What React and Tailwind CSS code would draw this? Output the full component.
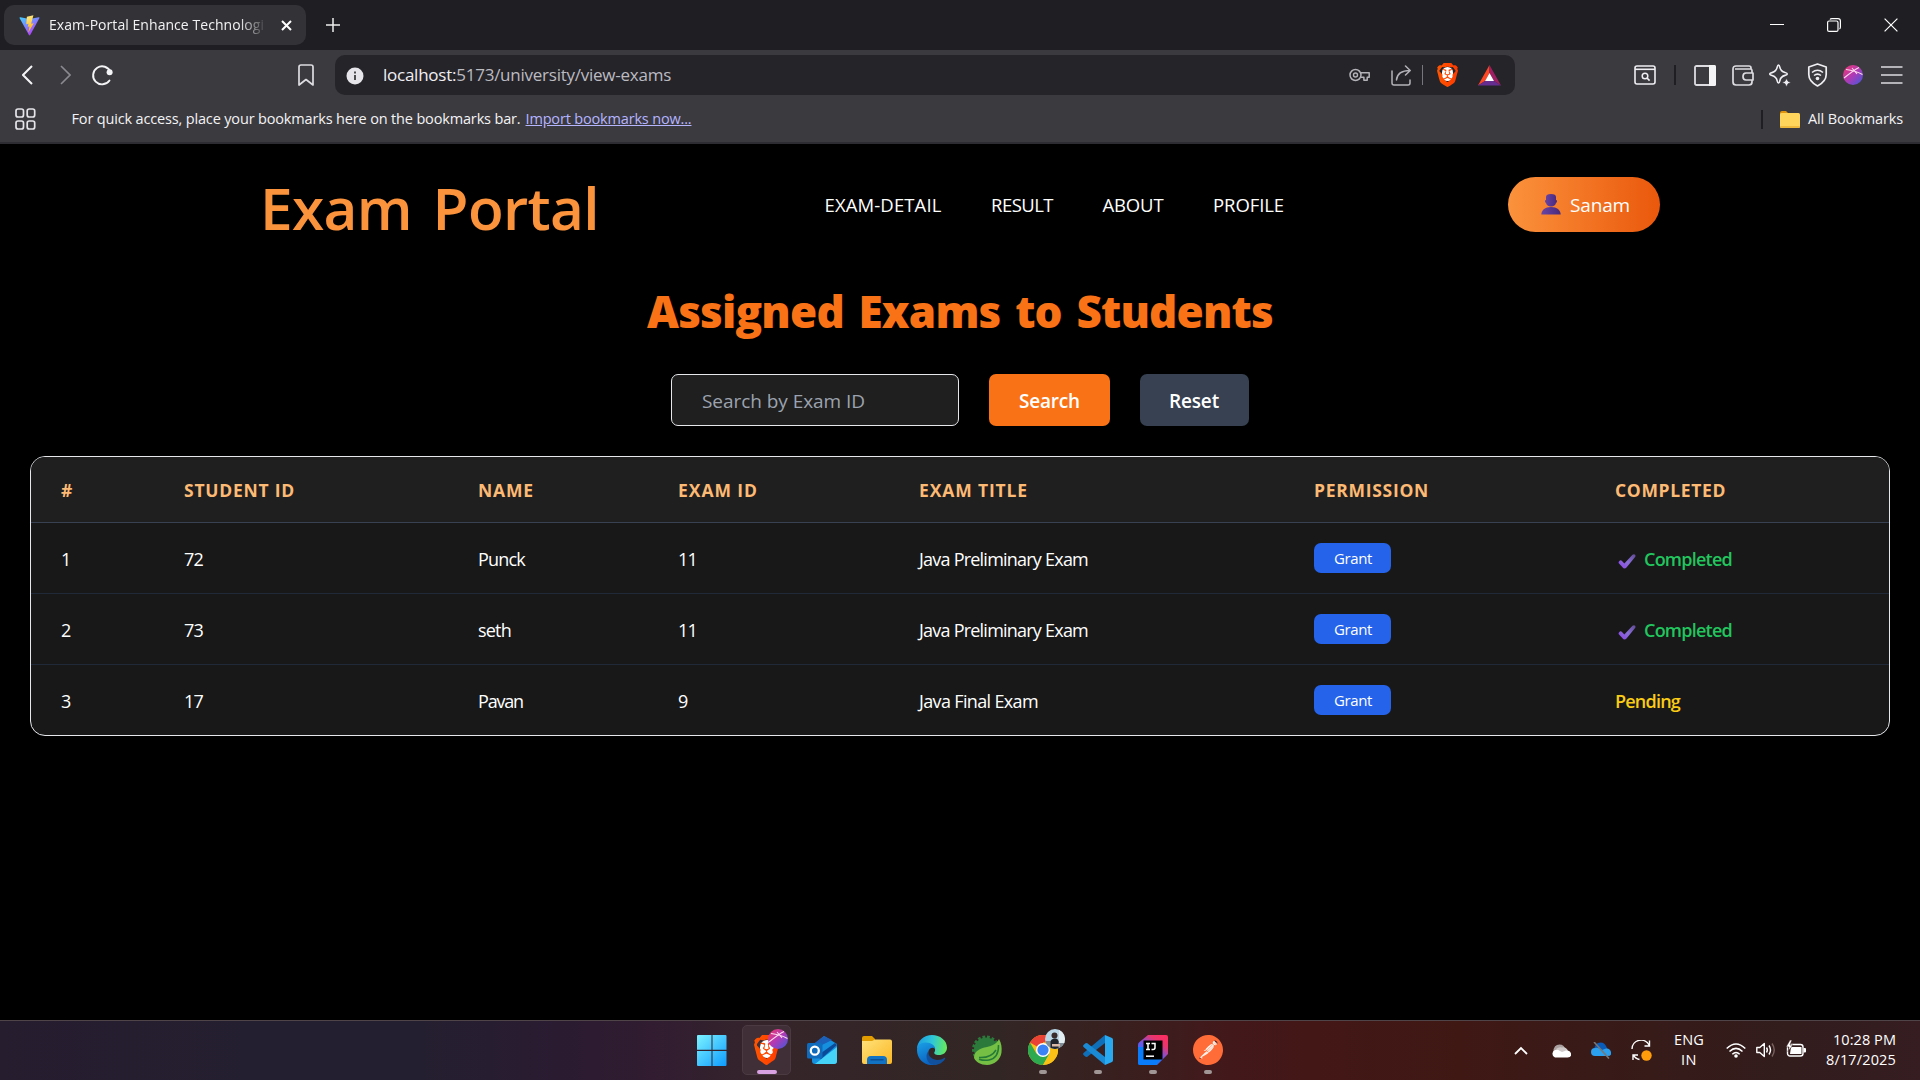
import React, { useLayoutEffect, useRef } from "react";
import { SiBrave, SiPostman } from "react-icons/si";

/* One-line label whose tracking is set so that it fills a given width. */
function Fit({ w, className = "", children }) {
  const ref = useRef(null);
  useLayoutEffect(() => {
    const el = ref.current;
    el.style.letterSpacing = "0px";
    const range = document.createRange();
    range.selectNodeContents(el);
    const natural = range.getBoundingClientRect().width;
    el.style.letterSpacing = (w - natural) / el.textContent.length + "px";
  }, [w]);
  return (
    <span ref={ref} className={"inline-block shrink-0 whitespace-nowrap " + className} style={{ width: w }}>
      {children}
    </span>
  );
}

function Svg({ w = 20, h = w, vb, className = "", children }) {
  return (
    <svg width={w} height={h} viewBox={vb || `0 0 ${w} ${h}`} fill="none" className={"shrink-0 " + className}>
      {children}
    </svg>
  );
}

function BraveLogo({ w, h, id }) {
  return (
    <span className="relative block shrink-0" style={{ width: w, height: h }}>
      <span className="absolute left-[22%] top-[18%] block h-[58%] w-[56%] rounded-full bg-white" />
      <svg width={w} height={h} viewBox="1.75 0 20.5 24" preserveAspectRatio="none" className="absolute left-0 top-0">
        <defs>
          <linearGradient id={id} x1="0" x2="1">
            <stop stopColor="#ff5500" />
            <stop offset="1" stopColor="#ff3a00" />
          </linearGradient>
        </defs>
        <SiBrave size={24} style={{ fill: `url(#${id})` }} />
      </svg>
    </span>
  );
}

function ProfileBall({ size, id }) {
  return (
    <Svg w={size} vb="0 0 20 20">
      <defs>
        <linearGradient id={id} x1="0" y1="0" x2="1" y2="1">
          <stop stopColor="#f0386b" />
          <stop offset=".5" stopColor="#b03ab5" />
          <stop offset="1" stopColor="#3b5be0" />
        </linearGradient>
      </defs>
      <circle cx="10" cy="10" r="10" fill={`url(#${id})`} />
      <path d="M1 13C6 9 11 5 16 2.500M3 4.500c5 .5 11 2 16.500 5M9 3l5 6" stroke="#ffd9ee" strokeWidth="1.100" />
    </Svg>
  );
}

function TabStrip() {
  return (
    <div className="flex h-[50px] items-center bg-[#1f1e23] pl-1 text-[#f2f2f4]">
      <div className="flex h-10 w-[302px] items-center rounded-[10px] bg-[#333337] pl-[15px]">
        <Svg w={21} vb="0 0 32 32">
          <defs>
            <linearGradient id="viteA" x1="0" y1="0" x2=".7" y2="1">
              <stop stopColor="#41d1ff" />
              <stop offset="1" stopColor="#bd34fe" />
            </linearGradient>
            <linearGradient id="viteB" x1=".4" y1="0" x2=".6" y2="1">
              <stop stopColor="#ffea83" />
              <stop offset="1" stopColor="#ffa800" />
            </linearGradient>
          </defs>
          <path d="M31 5 17 30.500q-.9 1.400-1.800 0L1 5q-.6-1.600 1-1.400l14 2.500 14-2.500q1.600-.2 1 1.400Z" fill="url(#viteA)" />
          <path d="m22 .5-10 2-1 11.500 3.500-.5-1.200 4.500 2.700-.5L14 27l8.500-14.500-4 .8Z" fill="url(#viteB)" />
        </Svg>
        <div className="ml-[9px] w-[218px] overflow-hidden text-[14px] leading-5 [mask-image:linear-gradient(to_right,black_190px,transparent_218px)]">
          <Fit w={215}>Exam-Portal Enhance Technologi</Fit>
        </div>
        <Svg w={11} className="ml-[14px]">
          <path d="m1 1 9 9m0-9-9 9" stroke="#fff" strokeWidth="2" />
        </Svg>
      </div>
      <Svg w={14} className="ml-5">
        <path d="M7 0v14M0 7h14" stroke="#eee" strokeWidth="1.500" />
      </Svg>
      <div className="ml-auto mr-[22px] flex items-center gap-[43px]">
        <Svg w={14}>
          <path d="M0 6.500h14" stroke="#fff" strokeWidth="1" />
        </Svg>
        <Svg w={14}>
          <rect x=".6" y="3" width="10.400" height="10.400" rx="1.500" stroke="#fff" strokeWidth="1.200" />
          <path d="M3 1.500Q3.500.6 5 .6h6q2.400 0 2.400 2.400v6q0 1.500-.9 2" stroke="#fff" strokeWidth="1.200" />
        </Svg>
        <Svg w={14}>
          <path d="m.6.6 12.800 12.800m0-12.800L.6 13.400" stroke="#fff" strokeWidth="1.200" />
        </Svg>
      </div>
    </div>
  );
}

function AddressRow() {
  return (
    <div className="flex h-[50px] items-center">
      <Svg w={11} h={20} className="ml-[22px]">
        <path d="m10 1-9 9 9 9" stroke="#f4f4f6" strokeWidth="2" />
      </Svg>
      <Svg w={11} h={20} className="ml-[27px]">
        <path d="m1 1 9 9-9 9" stroke="#8b8a90" strokeWidth="1.600" />
      </Svg>
      <Svg w={22} className="ml-5">
        <path d="M18.500 16.500A9 9 0 1 1 19.500 8" stroke="#f4f4f6" strokeWidth="1.900" strokeLinecap="round" />
        <circle cx="18.600" cy="8.200" r="3" fill="#f4f4f6" />
      </Svg>
      <Svg w={16} h={22} className="ml-[185px]">
        <path d="M1 3q0-2 2-2h10q2 0 2 2v18l-7-5.500L1 21Z" stroke="#dddce1" strokeWidth="1.700" strokeLinejoin="round" />
      </Svg>
      <div className="ml-[21px] flex h-10 w-[1180px] items-center rounded-[10px] bg-[#252429]">
        <Svg w={18} className="ml-[11px] mt-0.5">
          <circle cx="9" cy="9" r="8.500" fill="#e6e5ea" />
          <path d="M9 8v5M9 4.600v1.800" stroke="#333" strokeWidth="1.700" />
        </Svg>
        <Fit w={288} className="ml-[19px] text-[17px] leading-6 text-[#bcbbc1]">
          <span className="text-[#f0eff3]">localhost:</span>5173/university/view-exams
        </Fit>
        <Svg w={21} h={16} className="ml-auto">
          <circle cx="6.500" cy="8" r="5.500" stroke="#b3b2b8" strokeWidth="1.500" />
          <circle cx="6.500" cy="8" r="2" stroke="#b3b2b8" strokeWidth="1.400" />
          <path d="M11.500 5.700h8.700v4.500h-2v3h-3.300v-3h-3.200" stroke="#b3b2b8" strokeWidth="1.500" strokeLinejoin="round" />
        </Svg>
        <Svg w={21} className="ml-[21px]">
          <path d="M1 6v12q0 2 2 2h14q2 0 2-2v-3M5.500 15C6 9 10 5.500 19 5.500M14.500 1l4.700 4.500-4.700 4.500" stroke="#b3b2b8" strokeWidth="1.500" strokeLinecap="round" strokeLinejoin="round" />
        </Svg>
        <div className="ml-[10px] h-5 w-px bg-[#77767c]" />
        <div className="ml-[14px]">
          <BraveLogo w={21} h={24} id="braveSmall" />
        </div>
        <Svg w={23} h={21} className="ml-5 mr-[14px]">
          <path d="M11.500 0 0 20.500 7 16l4.500-8Z" fill="#ff4724" />
          <path d="M11.500 0 23 20.500 16 16l-4.500-8Z" fill="#9e1f63" />
          <path d="M0 20.500h23L16 16H7Z" fill="#662d91" />
          <path d="M11.500 8 7 16h9Z" fill="#fff" />
        </Svg>
      </div>
      <Svg w={22} h={20} className="ml-[119px]">
        <rect x="1" y="1" width="20" height="18" rx="2" stroke="#efeef2" strokeWidth="1.600" />
        <path d="M1 4.300h20" stroke="#efeef2" strokeWidth="1.600" />
        <circle cx="11" cy="11" r="2.800" stroke="#efeef2" strokeWidth="1.500" />
        <path d="m13 13 2.600 2.600" stroke="#efeef2" strokeWidth="1.700" />
      </Svg>
      <div className="ml-[18px] h-5 w-0.5 bg-[#1f1e23]" />
      <div className="ml-[18px] flex items-center gap-[15.600px]">
        <Svg w={22} h={21}>
          <rect x="1" y="1" width="20" height="19" rx="1.500" stroke="#dddce1" strokeWidth="1.800" />
          <path d="M15 0h5.500Q22 0 22 1.500v18q0 1.500-1.500 1.500H15Z" fill="#f4f4f6" />
        </Svg>
        <Svg w={22} h={21}>
          <path d="M20 8V5.500Q20 4 18.500 4H3M19 4V3q0-2-2-2H4Q1 1 1 4v13q0 3 3 3h13q3 0 3-3v-2" stroke="#dddce1" strokeWidth="1.700" />
          <path d="M21 8h-7q-3 0-3 3.500t3 3.500h7Z" stroke="#dddce1" strokeWidth="1.700" strokeLinejoin="round" />
        </Svg>
        <Svg w={22} h={24}>
          <path d="M9.500 2c.8 0 1 .6 1.300 2.200.7 3.400 1.800 4.500 5.200 5.400 1.600.4 2.300.6 2.300 1.400s-.7 1-2.300 1.400c-3.400.9-4.500 2-5.200 5.400C10.500 19.400 10.300 20 9.500 20s-1-.6-1.300-2.200C7.500 14.400 6.400 13.300 3 12.400 1.400 12 .7 11.800.7 11S1.400 10 3 9.600c3.400-.9 4.500-2 5.200-5.400C8.500 2.600 8.700 2 9.500 2Z" stroke="#efeef2" strokeWidth="1.600" />
          <path d="M17.500 15.500 19 18.300l3 1.200-3 1.200-1.500 3-1.500-3-3-1.200 3-1.200Z" fill="#efeef2" stroke="#3b3a3f" strokeWidth=".6" />
        </Svg>
        <Svg w={21} h={26}>
          <path d="m10.500 2 8.700 3v7.500c0 5.500-4 9-8.700 11.500-4.700-2.500-8.700-6-8.700-11.500V5Z" stroke="#efeef2" strokeWidth="1.700" strokeLinejoin="round" />
          <path d="M5 10.500q5.500-4.500 11 0M7 13.500q3.500-2.800 7 0" stroke="#efeef2" strokeWidth="1.600" />
          <circle cx="10.500" cy="16.500" r="1.800" fill="#efeef2" />
        </Svg>
        <ProfileBall size={20} id="ballSmall" />
        <Svg w={22} h={20} className="ml-0.5">
          <path d="M0 2h21.500M0 10h21.500M0 18h21.500" stroke="#dddce1" strokeWidth="1.700" />
        </Svg>
      </div>
    </div>
  );
}

function BookmarksRow() {
  return (
    <div className="flex h-[42px] items-center pb-[4px] text-[14.500px] text-[#f3f3f5]">
      <Svg w={21} h={22} className="ml-[14.500px]">
        <g stroke="#e6e5ea" strokeWidth="1.700">
          <rect x="1" y="1" width="7.500" height="8" rx="2" />
          <rect x="12.200" y="1" width="7.500" height="8" rx="2" />
          <rect x="1" y="13" width="7.500" height="8" rx="2" />
          <rect x="12.200" y="13" width="7.500" height="8" rx="2" />
        </g>
      </Svg>
      <Fit w={449} className="ml-9 text-[14.500px] leading-5">
        For quick access, place your bookmarks here on the bookmarks bar.
      </Fit>
      <Fit w={166} className="ml-[5px] text-[14.500px] leading-5 text-[#b5b4ff] underline">
        Import bookmarks now...
      </Fit>
      <div className="ml-auto h-[19px] w-0.5 bg-[#1f1e23]" />
      <Svg w={20} h={17} className="ml-[17px] mr-[8px]">
        <path d="M0 2q0-2 2-2h4l2 2v4H0Z" fill="#e0930c" />
        <rect y="2" width="20" height="15" rx="1.500" fill="#ffd45c" />
        <path d="M0 15h20q0 2-1.500 2h-17Q0 17 0 15Z" fill="#eeb93c" />
      </Svg>
      <Fit w={95} className="mr-[17px] text-[14.500px] leading-5">All Bookmarks</Fit>
    </div>
  );
}

const NAV = [
  ["EXAM-DETAIL", 117],
  ["RESULT", 62],
  ["ABOUT", 61],
  ["PROFILE", 71],
];

function SiteHeader() {
  return (
    <header className="flex h-[122px] items-center">
      <Fit w={339} className="ml-[260px] pt-[3px] text-[58.500px] font-semibold leading-[72px] text-[#fb923c] [word-spacing:6px]">Exam Portal</Fit>
      <nav className="ml-[225.500px] flex gap-[49.500px] text-[18.500px] leading-7 text-white">
        {NAV.map(([label, w]) => (
          <Fit key={label} w={w}>{label}</Fit>
        ))}
      </nav>
      <button className="mb-0.5 ml-auto mr-[260px] flex h-[55px] w-[152px] items-center rounded-full bg-linear-to-r/srgb from-[#fb923c] to-[#ea580c] pl-[33px] text-white">
        <Svg w={20} h={21}>
          <defs>
            <linearGradient id="bust" x1="0" x2="1">
              <stop stopColor="#6a45a5" />
              <stop offset="1" stopColor="#48297c" />
            </linearGradient>
          </defs>
          <path d="M5 3q0-3 5-3t5 3v3q1 0 1 1.200T15 9c-.6 2.200-2 3.500-5 3.500S5.600 11.200 5 9Q4 8.500 4 7.200T5 6Z" fill="url(#bust)" />
          <path d="M.3 20.500C.5 16 4 13 10 13s9.500 3 9.700 7.500Z" fill="url(#bust)" />
        </Svg>
        <Fit w={60} className="ml-[9px] pt-px text-[19px] font-medium leading-7">Sanam</Fit>
      </button>
    </header>
  );
}

function SearchForm() {
  return (
    <div className="mt-[33px] flex h-[52px] justify-center gap-[30px]">
      <div className="flex w-72 items-center rounded-[7px] border border-[#e5e7eb] bg-[#1f1f1f] pl-[30px] pt-0.5">
        <Fit w={163} className="text-[19px] leading-7 text-[#9ca3af]">Search by Exam ID</Fit>
      </div>
      <button className="flex w-[121px] items-center rounded-[7px] bg-[#f97316] pl-[30px] pt-0.5 text-white">
        <Fit w={61} className="text-[19px] font-semibold leading-7">Search</Fit>
      </button>
      <button className="flex w-[109px] items-center rounded-[7px] bg-[#374151] pl-[29px] pt-0.5 text-white">
        <Fit w={50} className="text-[19px] font-semibold leading-7">Reset</Fit>
      </button>
    </div>
  );
}

const COLUMNS = [
  ["#", 12],
  ["STUDENT ID", 111],
  ["NAME", 56],
  ["EXAM ID", 80],
  ["EXAM TITLE", 109],
  ["PERMISSION", 115],
  ["COMPLETED", 111],
];

const ROWS = [
  { n: "1", id: "72", name: ["Punck", 47], exam: ["11", 19], title: ["Java Preliminary Exam", 169], done: true },
  { n: "2", id: "73", name: ["seth", 33], exam: ["11", 19], title: ["Java Preliminary Exam", 169], done: true },
  { n: "3", id: "17", name: ["Pavan", 45], exam: ["9", 10], title: ["Java Final Exam", 119], done: false },
];

function CheckMark() {
  return (
    <Svg w={18} h={15}>
      <defs>
        <linearGradient id="tick" x1="0" y1="1" x2="1" y2="0">
          <stop stopColor="#8b3fe8" />
          <stop offset=".5" stopColor="#8a6fd6" />
          <stop offset="1" stopColor="#5f4a94" />
        </linearGradient>
      </defs>
      <path d="M1 7.500Q2.500 5.500 4 7l2.300 2.500L14.500.8q1.200-.9 2.300-.2 1.200 1 .3 2.500L8.500 13.500Q6.300 15.800 4.300 13L.8 9.200Q.3 8.300 1 7.500Z" fill="url(#tick)" />
    </Svg>
  );
}

function ExamTable() {
  const grid = "grid grid-cols-[123px_294px_200px_241px_395px_301px_1fr] items-center [&>*]:justify-self-start [&>*]:ml-[30px]";
  return (
    <div className="mx-[30px] mt-[30px] overflow-hidden rounded-[15px] border border-[#e5e7eb] bg-[#181818]">
      <div className={grid + " h-[66px] border-b border-[#374151] bg-[#1f1f1f] text-[17.500px] font-bold leading-7 text-[#fdba74]"}>
        {COLUMNS.map(([label, w]) => (
          <Fit key={label} w={w}>{label}</Fit>
        ))}
      </div>
      {ROWS.map((r) => (
        <div
          key={r.n}
          className={grid + " h-[71px] border-b border-[#1f2937] text-[18px] leading-7 text-white last:h-[70px] last:border-b-0"}
        >
          <Fit w={10} className="pt-px">{r.n}</Fit>
          <Fit w={19} className="pt-px">{r.id}</Fit>
          <Fit w={r.name[1]} className="pt-px">{r.name[0]}</Fit>
          <Fit w={r.exam[1]} className="pt-px">{r.exam[0]}</Fit>
          <Fit w={r.title[1]} className="pt-px">{r.title[0]}</Fit>
          <button className="flex h-[30px] w-[77px] items-center rounded-[7px] bg-[#2563eb] pl-5 text-white">
            <Fit w={38} className="text-[15px] leading-5">Grant</Fit>
          </button>
          {r.done ? (
            <div className="flex items-center pl-[3px] pt-px">
              <div className="pt-1.5"><CheckMark /></div>
              <Fit w={88} className="ml-2 font-semibold text-[#22c55e]">Completed</Fit>
            </div>
          ) : (
            <Fit w={65} className="pt-px font-semibold text-[#facc15]">Pending</Fit>
          )}
        </div>
      ))}
    </div>
  );
}

function WindowsIcon() {
  return (
    <Svg w={30} h={31}>
      <defs>
        <linearGradient id="win" x1="0" y1="0" x2="30" y2="31" gradientUnits="userSpaceOnUse">
          <stop stopColor="#7cf3ff" />
          <stop offset="1" stopColor="#0d9aff" />
        </linearGradient>
      </defs>
      <path d="M1 0h13.500v14.800H0V1Q0 0 1 0ZM15.500 0H28.500q1 0 1 1v13.800h-14ZM0 16h14.500v15H1q-1 0-1-1ZM15.500 16h14v14q0 1-1 1h-13Z" fill="url(#win)" />
    </Svg>
  );
}

function OutlookIcon() {
  return (
    <Svg w={30} h={28}>
      <path d="M5 10 17 0l13 8v17q0 3-3 3H8q-3 0-3-3Z" fill="#1490df" />
      <path d="M17 0 5 9v5l20-10Z" fill="#1b5fb8" />
      <path d="M10 20 28 7l2 2-16 14Z" fill="#0b4a97" />
      <path d="M8 28 30 11v14q0 3-3 3Z" fill="#45d4f8" />
      <rect y="7" width="15.500" height="15.500" rx="1.500" fill="#0f6cbd" />
      <circle cx="7.800" cy="14.700" r="4" stroke="#fff" strokeWidth="2.300" />
    </Svg>
  );
}

function ExplorerIcon() {
  return (
    <Svg w={30} h={29}>
      <defs>
        <linearGradient id="fold" x1="0" y1="0" x2="1" y2="1">
          <stop stopColor="#ffe27a" />
          <stop offset="1" stopColor="#fbb724" />
        </linearGradient>
      </defs>
      <path d="M0 2q0-2 2-2h8l3 3v6H0Z" fill="#e09c00" />
      <path d="M0 5h10l3-1.500h15q2 0 2 2V26q0 2-2 2H2q-2 0-2-2Z" fill="url(#fold)" />
      <path d="M5 28v-4q0-4 4-4h12q4 0 4 4v4Z" fill="#1273c4" />
      <path d="M9 23.800h12" stroke="#0b4f94" strokeWidth="1.500" strokeLinecap="round" />
    </Svg>
  );
}

function EdgeIcon() {
  return (
    <Svg w={30} vb="0 0 30 30">
      <defs>
        <linearGradient id="edgeA" x1="0" y1=".4" x2="1" y2=".5">
          <stop stopColor="#1b9de2" />
          <stop offset=".5" stopColor="#2fc6d8" />
          <stop offset="1" stopColor="#66eb5a" />
        </linearGradient>
        <linearGradient id="edgeB" x1="0" y1="0" x2=".4" y2="1">
          <stop stopColor="#1aa0e6" />
          <stop offset="1" stopColor="#0b63c0" />
        </linearGradient>
      </defs>
      <path d="M0 14C0 6 7 0 15 0s15 5.500 15 12.500c0 5-4 7.500-8 7.500s-5.500-1.500-4.500-3c1.500-2 .5-6.500-4.500-7.500C7 8.500 1.500 11 0 14Z" fill="url(#edgeA)" />
      <path d="M0 15C0 10.500 3.500 7.500 8.500 7.500c6 0 9.500 3 9.800 6.500-2.300-2.300-6.300-1-7 3C10.500 22 14 27 20 28c-2 1.500-3.500 2-5.500 2C6 30 0 23 0 15Z" fill="url(#edgeB)" />
      <path d="M11.200 16.500C10.500 20.500 15 25 20.500 25c3 0 5-1 6.500-2 1-.5 1.500.2 1 1C25 29 19 31 14.500 29.500 9.500 27 8 20 11.200 16.500Z" fill="#10509c" />
    </Svg>
  );
}

function SpringIcon() {
  return (
    <Svg w={30} vb="0 0 30 30">
      <circle cx="14" cy="14.500" r="12" stroke="#2c7a3b" strokeWidth="4" strokeDasharray="2.600 1.800" />
      <circle cx="14" cy="14.500" r="12" fill="#2c7a3b" />
      <path d="M27 4c2.500 4 3 9 2.500 13.500C28.500 25 22 30 15 30 8.500 30 4 27 2 23c0-7 6-9.500 13-11 5-1 9.500-3 12-8Z" fill="#74bf44" />
      <path d="M26.500 10c.3 8-2.500 13.500-9.500 15-3 .6-7 .3-10-.8M7 22.500c8 .5 14-2.500 17-7.500" stroke="#257a38" strokeWidth="1.500" fill="none" />
    </Svg>
  );
}

function ChromeIcon() {
  return (
    <div className="relative h-[30px] w-[30px]">
      <Svg w={30} vb="0 0 30 30">
        <circle cx="15" cy="15" r="15" fill="#fbc016" />
        <path d="M15 15 2 7.500A15 15 0 0 1 28 7.500H15Z" fill="#ea4335" />
        <path d="M2 7.500A15 15 0 0 0 15 30l6.500-11.300L15 15 8.500 18.700Z" fill="#2da94f" />
        <path d="M28 7.500H15l6.500 11.300L15 30A15 15 0 0 0 28 7.500Z" fill="#fbc016" />
        <circle cx="15" cy="15" r="7" fill="#fff" />
        <circle cx="15" cy="15" r="5.600" fill="#3b82f6" />
      </Svg>
      <Svg w={20} className="absolute -top-1.5 left-[17px]">
        <clipPath id="photo"><circle cx="10" cy="10" r="10" /></clipPath>
        <g clipPath="url(#photo)">
          <rect width="20" height="20" fill="#b9d7e6" />
          <rect y="12" width="20" height="8" fill="#7e8d95" />
          <path d="M14 0h6v14h-6Z" fill="#e2edf2" />
          <path d="M5.500 20v-7q0-3 4-3.500t4 3.500v7Z" fill="#23252d" />
          <circle cx="9.500" cy="6.500" r="3" fill="#3a2c2c" />
          <path d="M7 15h8v2.500H7Z" fill="#d8b9a8" />
        </g>
      </Svg>
    </div>
  );
}

function VsCodeIcon() {
  return (
    <Svg w={30} vb="0 0 30 30">
      <path d="m22 0 7 3q1 .5 1 2v20q0 1.500-1 2l-7 3Z" fill="#29a9f0" />
      <path d="M22 0v8L4 22 2.500 21.800.5 20q-.8-1 0-2Z" fill="#0f6fb8" />
      <path d="M22 30v-8L4 8l-1.500.2L.5 10q-.8 1 0 2Z" fill="#1a8ad4" />
    </Svg>
  );
}

function IntelliJIcon() {
  return (
    <Svg w={30} vb="0 0 30 30">
      <defs>
        <linearGradient id="ij" x1=".9" y1="0" x2=".2" y2="1">
          <stop stopColor="#ff2d5f" />
          <stop offset=".25" stopColor="#e8356e" />
          <stop offset=".55" stopColor="#6b57e8" />
          <stop offset="1" stopColor="#087cfa" />
        </linearGradient>
      </defs>
      <path d="M10 0h18q2 0 2 2v17L19 30H2q-2 0-2-2V10Q0 8 1.500 7Z" fill="url(#ij)" />
      <path d="M0 12h8v12h16l-6 6H2q-2 0-2-2Z" fill="#087cfa" />
      <rect x="5.500" y="5.500" width="19" height="19" fill="#000" />
      <path d="M8 8.500h4M10 8.500v6M8 14.500h4M13.500 8.500h3.500v4q0 2-2 2h-1.500" stroke="#fff" strokeWidth="1.500" />
      <path d="M8 21.200h8" stroke="#fff" strokeWidth="1.500" />
    </Svg>
  );
}

function PostmanIcon() {
  return (
    <span className="relative block h-[30px] w-[30px]">
      <span className="absolute inset-1 rounded-full bg-[#fff1ea]" />
      <SiPostman className="absolute inset-0 text-[#ff6c37]" size={30} />
    </span>
  );
}

function BraveTaskIcon() {
  return (
    <span className="relative block">
      <BraveLogo w={25} h={30} id="braveBig" />
      <span className="absolute -top-1.5 left-3.5">
        <ProfileBall size={20} id="ballBig" />
      </span>
    </span>
  );
}

const APPS = [
  { id: "start", icon: <WindowsIcon /> },
  { id: "brave", icon: <BraveTaskIcon />, active: true },
  { id: "outlook", icon: <OutlookIcon /> },
  { id: "explorer", icon: <ExplorerIcon /> },
  { id: "edge", icon: <EdgeIcon /> },
  { id: "spring", icon: <SpringIcon /> },
  { id: "chrome", icon: <ChromeIcon />, open: true },
  { id: "vscode", icon: <VsCodeIcon />, open: true },
  { id: "intellij", icon: <IntelliJIcon />, open: true },
  { id: "postman", icon: <PostmanIcon />, open: true },
];

function Taskbar() {
  return (
    <footer className="flex h-[60px] items-center border-t border-[#4f4448] bg-[linear-gradient(90deg,#261d2f_0%,#241f30_13%,#241f30_22%,#2a1b31_29%,#311c31_34%,#35252a_40%,#322624_52%,#38201f_58%,#43181b_64%,#431716_68%,#3f1814_76%,#361b19_86%,#321c1c_93%,#351d21_100%)] text-white">
      <div className="-mt-px ml-[687px] flex gap-[6.200px]">
        {APPS.map((app) => (
          <div
            key={app.id}
            className={
              "flex h-[50px] w-[49px] flex-col items-center rounded-[5px] " +
              (app.active ? "border border-[#4b3a42] bg-[#402f36]" : "")
            }
          >
            <div className={"flex h-[43px] items-center justify-center " + (app.active ? "pb-0 pt-[5px]" : "pt-[7px]")}>{app.icon}</div>
            {app.active && <div className="mt-px h-1 w-5 shrink-0 rounded-full bg-[#d9a0e2]" />}
            {app.open && <div className="mt-0.5 h-1 w-2 shrink-0 rounded-full bg-[#a09695]" />}
          </div>
        ))}
      </div>
      <Svg w={14} h={9} className="ml-auto">
        <path d="m1 8 6-6 6 6" stroke="#fff" strokeWidth="1.800" />
      </Svg>
      <Svg w={20} h={14} className="ml-[23px]">
        <path d="M3 9a6 6 0 0 1 11-5l2 4Z" fill="#a9a09f" />
        <path d="M11 3.500a5 5 0 0 1 6 3.500L9 9 5 5q3-2.500 6-1.500Z" fill="#cfcac9" />
        <path d="M4 13.500a4 4 0 0 1 0-7.500q2.500-.8 5 1l2 1 4-1.500q4-.5 5 3t-3.500 4Z" fill="#fff" />
      </Svg>
      <Svg w={20} h={17} className="ml-5">
        <path d="M4 9a6 6 0 0 1 11-5l2 4Z" fill="#0a5cba" />
        <path d="M4 14a4 4 0 0 1 0-8q2.500-.8 5 1l2 1 4-1.500q4-.5 5 3.500t-3.500 4Z" fill="#2ba0ee" />
        <path d="m3 0 15 16.500" stroke="#777" strokeWidth="1.600" />
      </Svg>
      <Svg w={21} className="ml-5 -mt-px">
        <path d="M1 9A9 9 0 0 1 18 5M18.500.5V6h-5M2 20v-5h5M2.500 15q1.500 3.500 6 4.500" stroke="#fff" strokeWidth="1.400" />
        <circle cx="15.500" cy="15.500" r="5.200" fill="#ff9d0a" />
      </Svg>
      <div className="-mt-px ml-[22px] flex w-[30px] flex-col items-center text-[14.500px] leading-5">
        <Fit w={30}>ENG</Fit>
        <Fit w={16}>IN</Fit>
      </div>
      <Svg w={20} h={16} className="-mt-0.5 ml-[22px]">
        <path d="M.7 6.500q9.300-9 18.600 0M3.500 9.500q6.500-6.200 13 0M6.300 12.200q3.700-3.500 7.400 0" stroke="#fff" strokeWidth="1.500" />
        <circle cx="10" cy="14" r="1.800" fill="#fff" />
      </Svg>
      <Svg w={20} h={16} className="-mt-0.5 ml-[10px]">
        <path d="M.8 5.500h3l4.500-4v13l-4.500-4h-3Z" stroke="#fff" strokeWidth="1.400" strokeLinejoin="round" />
        <path d="M10.500 5.500q1.700 2.500 0 5M13 3.500q3 4.500 0 9" stroke="#fff" strokeWidth="1.400" />
        <path d="M16 1.500q4.500 6.500 0 13" stroke="#77605d" strokeWidth="1.400" />
      </Svg>
      <Svg w={20} h={17} className="-mt-[5px] ml-[10px]">
        <rect x="1.500" y="4.500" width="15.500" height="11.500" rx="2.500" stroke="#fff" strokeWidth="1.400" />
        <path d="M5 7h10.500v7H4ZM17.500 8H19q1 0 1 1v2.500q0 1-1 1h-1.500Z" fill="#fff" />
        <path d="M4 0 0 7h3l-1 4.500L7 5H4L6 0Z" fill="#fff" stroke="#361b19" strokeWidth=".6" />
      </Svg>
      <div className="-mt-0.5 ml-[20px] mr-[24px] flex flex-col items-end text-[14.500px] leading-5">
        <Fit w={63}>10:28 PM</Fit>
        <Fit w={70}>8/17/2025</Fit>
      </div>
    </footer>
  );
}

export default function App() {
  return (
    <div className="flex h-[1080px] w-[1920px] flex-col overflow-hidden bg-black font-['Open_Sans','Noto_Sans',sans-serif]">
      <TabStrip />
      <div className="h-[94px] border-b-2 border-[#2d2c33] bg-[#3b3a3f]">
        <AddressRow />
        <BookmarksRow />
      </div>
      <main className="flex-1 bg-black">
        <SiteHeader />
        <h1 className="mt-[15px] flex justify-center pt-px text-[44px] font-extrabold leading-[59px] text-[#f97316] [word-spacing:4px]">
          <Fit w={626}>Assigned Exams to Students</Fit>
        </h1>
        <SearchForm />
        <ExamTable />
      </main>
      <Taskbar />
    </div>
  );
}
